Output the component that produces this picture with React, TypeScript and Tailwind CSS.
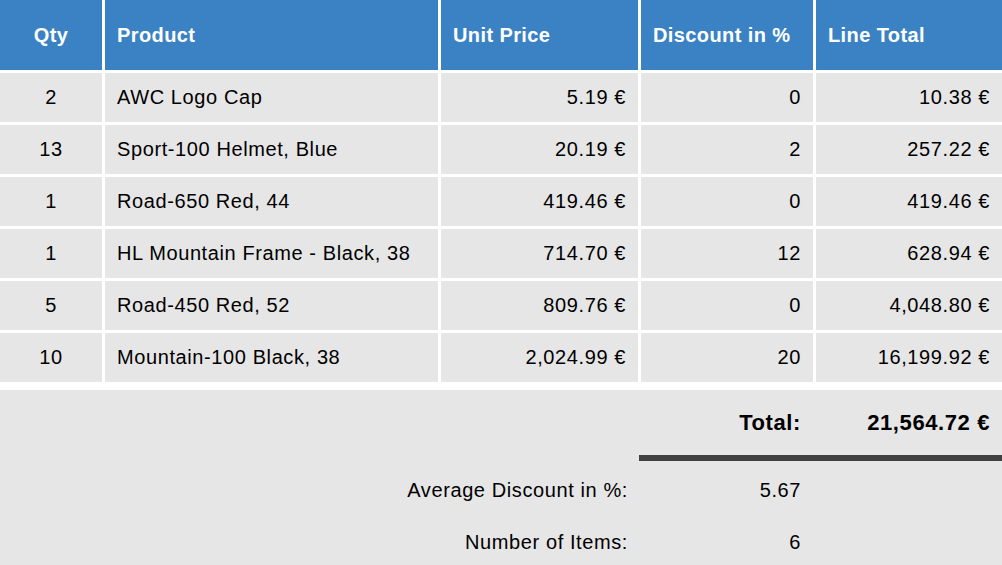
import React from "react";

const rows = [
  { qty: "2", product: "AWC Logo Cap", price: "5.19 €", disc: "0", total: "10.38 €" },
  { qty: "13", product: "Sport-100 Helmet, Blue", price: "20.19 €", disc: "2", total: "257.22 €" },
  { qty: "1", product: "Road-650 Red, 44", price: "419.46 €", disc: "0", total: "419.46 €" },
  { qty: "1", product: "HL Mountain Frame - Black, 38", price: "714.70 €", disc: "12", total: "628.94 €" },
  { qty: "5", product: "Road-450 Red, 52", price: "809.76 €", disc: "0", total: "4,048.80 €" },
  { qty: "10", product: "Mountain-100 Black, 38", price: "2,024.99 €", disc: "20", total: "16,199.92 €" },
];

const cols = "grid grid-cols-[102px_333px_197px_172px_186px] gap-x-[3px]";

export default function App() {
  return (
    <div
      className="w-[1002px] h-[565px] bg-white overflow-hidden text-black"
      style={{ fontFamily: '"Liberation Sans", Arial, sans-serif' }}
    >
      <div className={`${cols} gap-y-[3px]`}>
        <div className="h-[70px] bg-[#3a82c4] text-white font-bold text-[20px] tracking-[0.4px] flex items-center justify-center">Qty</div>
        <div className="h-[70px] bg-[#3a82c4] text-white font-bold text-[20px] tracking-[0.4px] flex items-center px-3">Product</div>
        <div className="h-[70px] bg-[#3a82c4] text-white font-bold text-[20px] tracking-[0.4px] flex items-center px-3">Unit Price</div>
        <div className="h-[70px] bg-[#3a82c4] text-white font-bold text-[20px] tracking-[0.4px] flex items-center px-3">Discount in %</div>
        <div className="h-[70px] bg-[#3a82c4] text-white font-bold text-[20px] tracking-[0.4px] flex items-center px-3">Line Total</div>
        {rows.map((r, i) => (
          <React.Fragment key={i}>
            <div className="h-[49px] bg-[#e6e6e6] text-[20px] tracking-[0.6px] flex items-center justify-center pb-[1px]">{r.qty}</div>
            <div className="h-[49px] bg-[#e6e6e6] text-[20px] tracking-[0.6px] flex items-center px-3 pb-[1px]">{r.product}</div>
            <div className="h-[49px] bg-[#e6e6e6] text-[20px] tracking-[0.6px] flex items-center justify-end pr-3 pb-[1px]">{r.price}</div>
            <div className="h-[49px] bg-[#e6e6e6] text-[20px] tracking-[0.6px] flex items-center justify-end pr-3 pb-[1px]">{r.disc}</div>
            <div className="h-[49px] bg-[#e6e6e6] text-[20px] tracking-[0.6px] flex items-center justify-end pr-3 pb-[1px]">{r.total}</div>
          </React.Fragment>
        ))}
      </div>
      <div className="mt-[8px] h-[175px] bg-[#e6e6e6]">
        <div className={`${cols} h-[65px] items-center text-[22px] font-bold tracking-[0.6px]`}>
          <div className="col-start-4 text-right pr-3">Total:</div>
          <div className="text-right pr-3">21,564.72 €</div>
        </div>
        <div className="flex justify-end">
          <div className="w-[363px] h-[6px] bg-[#404040]" />
        </div>
        <div className={`${cols} h-[58px] items-center text-[20px] tracking-[0.6px]`}>
          <div className="col-span-3 text-right pr-[10px]">Average Discount in %:</div>
          <div className="text-right pr-3">5.67</div>
        </div>
        <div className={`${cols} h-[46px] items-center text-[20px] tracking-[0.6px]`}>
          <div className="col-span-3 text-right pr-[10px]">Number of Items:</div>
          <div className="text-right pr-3">6</div>
        </div>
      </div>
    </div>
  );
}
